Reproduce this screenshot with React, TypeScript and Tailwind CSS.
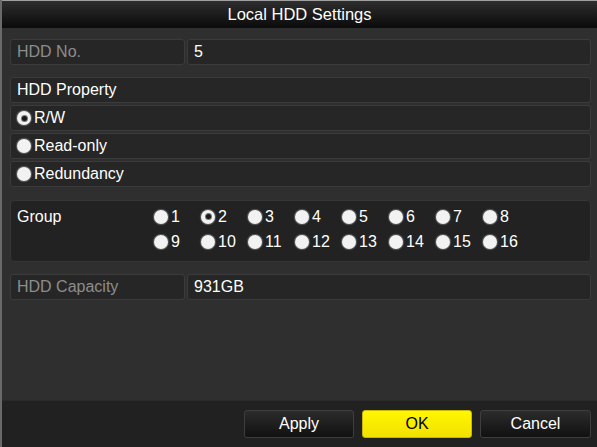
import React from "react";

const font = { fontFamily: '"Liberation Sans", Arial, sans-serif' };

function Radio({ checked }: { checked?: boolean }) {
  return (
    <span className="inline-flex h-[14px] w-[14px] shrink-0 items-center justify-center rounded-full bg-[#f2f2f2] shadow-[0_0_1px_1px_rgba(200,200,200,0.35)]">
      {checked && <span className="h-[5px] w-[5px] rounded-full bg-[#1a1a1a] ring-1 ring-[#777]" />}
    </span>
  );
}

function Row({
  children,
  className = "",
  muted,
}: {
  children: React.ReactNode;
  className?: string;
  muted?: boolean;
}) {
  return (
    <div
      className={`flex h-[26px] items-center rounded-[3px] border border-[#3b3b3b] bg-[#262626] px-[6px] text-[16px] ${
        muted ? "text-[#8d8d8d]" : "text-white"
      } ${className}`}
    >
      {children}
    </div>
  );
}

export default function App() {
  const groups = Array.from({ length: 16 }, (_, i) => i + 1);
  return (
    <div style={font} className="flex h-[447px] w-[597px] flex-col overflow-hidden border-l-2 border-[#6a6a6a] bg-[#2f2f2f]">
      <div className="flex h-[28px] shrink-0 items-center justify-center border-t border-[#a0a0a0] bg-gradient-to-b from-[#2e2e2e] to-[#0b0b0b] text-[16.5px] text-white">
        Local HDD Settings
      </div>
      <div className="flex flex-1 flex-col pl-[8px] pr-[6px]">
        <div className="mt-[11px] flex gap-[2px]">
          <Row className="w-[175px]" muted>
            HDD No.
          </Row>
          <Row className="flex-1">5</Row>
        </div>

        <div className="mt-[12px] flex flex-col gap-[2px]">
          <Row>HDD Property</Row>
          <Row>
            <span className="flex items-center gap-[3px]">
              <Radio checked />
              R/W
            </span>
          </Row>
          <Row>
            <span className="flex items-center gap-[3px]">
              <Radio />
              Read-only
            </span>
          </Row>
          <Row>
            <span className="flex items-center gap-[3px]">
              <Radio />
              Redundancy
            </span>
          </Row>
        </div>

        <div className="mt-[13px] flex h-[62px] items-start rounded-[4px] border border-[#363636] bg-[#222222] pl-[6px] pt-[6px] text-[16px] text-white">
          <div className="w-[137px] leading-[19px]">Group</div>
          <div className="grid grid-cols-[repeat(8,47px)] content-start gap-y-[6px]">
            {groups.map((g) => (
              <span key={g} className="flex h-[19px] items-center gap-[3px]">
                <Radio checked={g === 2} />
                {g}
              </span>
            ))}
          </div>
        </div>

        <div className="mt-[12px] flex gap-[2px]">
          <Row className="w-[175px]" muted>
            HDD Capacity
          </Row>
          <Row className="flex-1">931GB</Row>
        </div>
      </div>

      <div className="flex h-[47px] shrink-0 items-center justify-end gap-[8px] border-t border-[#2a2a2a] bg-[#212121] pr-[6px]">
        <button className="h-[28px] w-[110px] rounded-[3px] border border-[#3e3e3e] bg-gradient-to-b from-[#2c2c2c] to-[#111111] text-[16px] text-white">
          Apply
        </button>
        <button className="h-[28px] w-[110px] rounded-[3px] border border-[#c8b800] bg-gradient-to-b from-[#fff700] to-[#f2e000] text-[16px] text-black">
          OK
        </button>
        <button className="h-[28px] w-[111px] rounded-[3px] border border-[#3e3e3e] bg-gradient-to-b from-[#2c2c2c] to-[#111111] text-[16px] text-white">
          Cancel
        </button>
      </div>
    </div>
  );
}
